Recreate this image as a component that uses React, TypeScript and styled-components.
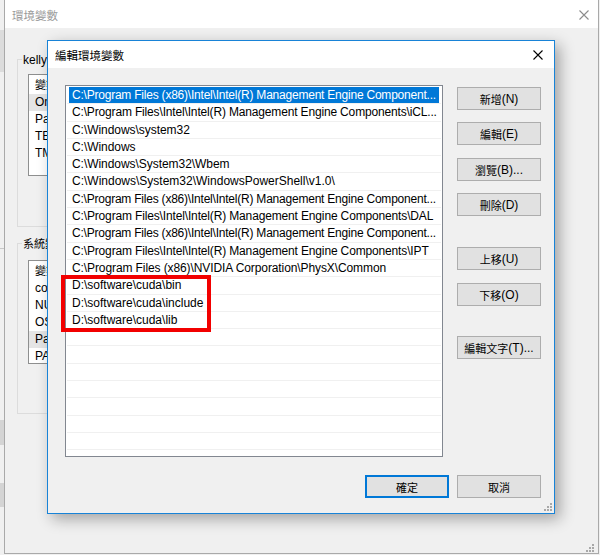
import React from 'react';
import styled, { createGlobalStyle } from 'styled-components';

const Global = createGlobalStyle`
  html, body { margin: 0; padding: 0; }
  body {
    width: 600px; height: 555px; overflow: hidden;
    background: #f0f0f0;
    font-family: "Liberation Sans", "Noto Sans CJK TC", sans-serif;
    font-size: 12px; color: #000;
  }
  * { box-sizing: border-box; }
`;

const Desktop = styled.div`
  position: relative;
  width: 600px;
  height: 555px;
  overflow: hidden;
  background: #f0f0f0;
`;

/* ---------- window peeking out on the far left ---------- */
const BehindWindow = styled.div`
  position: absolute;
  left: 0;
  top: 0;
  width: 4px;
  height: 555px;
  background: #f0f0f0;
  display: flex;
  flex-direction: column;
`;
const BehindBlock = styled.div<{ $top: number; $h: number; $bg: string }>`
  margin-top: ${p => p.$top}px;
  height: ${p => p.$h}px;
  background: ${p => p.$bg};
`;

/* ---------- background window (環境變數) ---------- */
const BgWindow = styled.div`
  position: absolute;
  left: 4px;
  top: -1px;
  width: 595px;
  height: 555px;
  border: 1px solid #a9a9a9;
  background: #f0f0f0;
  display: flex;
  flex-direction: column;
`;
const BgTitleBar = styled.div`
  height: 28px;
  flex: none;
  background: #fff;
  display: flex;
  align-items: center;
  justify-content: space-between;
  padding: 1px 9px 0 7px;
  color: #999;
`;
const BgBody = styled.div`
  flex: 1;
  padding: 24px 0 0 12px;
  display: flex;
  flex-direction: column;
`;
const GroupBox = styled.fieldset<{ $mt: number; $pb: number }>`
  margin: ${p => p.$mt}px 0 0 0;
  padding: 0 0 ${p => p.$pb}px 4px;
  width: 530px;
  border: 1px solid #dcdcdc;
  min-width: 0;
`;
const Legend = styled.legend`
  padding: 0 2px 0 1px;
  line-height: 14px;
  font-size: 12px;
  white-space: nowrap;
`;
const ListView = styled.div<{ $mt: number; $h: number }>`
  margin: ${p => p.$mt}px 0 0 6px;
  width: 500px;
  height: ${p => p.$h}px;
  border: 1px solid #8e8f8f;
  background: #fff;
  overflow: hidden;
`;
const LvHeader = styled.div`
  height: 19px;
  line-height: 19px;
  padding-left: 6px;
  white-space: nowrap;
`;
const LvRow = styled.div<{ $hl?: boolean }>`
  height: 17px;
  line-height: 17px;
  padding-left: 6px;
  white-space: nowrap;
  background: ${p => (p.$hl ? '#e5e5e5' : 'transparent')};
`;

/* ---------- front dialog (編輯環境變數) ---------- */
const Dialog = styled.div`
  position: absolute;
  left: 47px;
  top: 40px;
  width: 508px;
  height: 474px;
  border: 1px solid #1883d7;
  background: #f0f0f0;
  box-shadow: 5px 5px 14px rgba(0, 0, 0, 0.32);
  display: flex;
  flex-direction: column;
`;
const DlgTitleBar = styled.div`
  height: 27px;
  flex: none;
  background: #fff;
  display: flex;
  align-items: center;
  justify-content: space-between;
  padding: 0 11px 0 7px;
`;
const DlgBody = styled.div`
  flex: 1;
  padding: 17px 13px 15px 17px;
  display: grid;
  grid-template-columns: 378px 84px;
  grid-template-rows: 372px 23px;
  column-gap: 14px;
  row-gap: 18px;
`;
const ListArea = styled.div`
  position: relative;
`;
const ListBox = styled.div`
  height: 372px;
  border: 1px solid #828790;
  background: #fff;
  padding: 1px;
  overflow: hidden;
`;
const PathRow = styled.div`
  height: 17.3px;
  border-bottom: 1px solid #f0f0f0;
  padding: 0 2px;
  display: flex;
`;
const PathCell = styled.div<{ $sel?: boolean; $ls: number }>`
  flex: 1;
  min-width: 0;
  padding-left: 3px;
  line-height: 16px;
  white-space: nowrap;
  overflow: hidden;
  letter-spacing: ${p => p.$ls}px;
  background: ${p => (p.$sel ? '#0078d7' : 'transparent')};
  color: ${p => (p.$sel ? '#fff' : '#000')};
`;
const Highlight = styled.div`
  position: absolute;
  left: -4px;
  top: 190px;
  width: 150px;
  height: 57px;
  border: 4px solid #f20000;
  pointer-events: none;
`;
const ButtonColumn = styled.div`
  display: flex;
  flex-direction: column;
  padding-top: 2px;
`;
const Button = styled.div<{ $mt?: number; $default?: boolean }>`
  margin-top: ${p => p.$mt ?? 0}px;
  width: 84px;
  height: 23px;
  flex: none;
  background: #e1e1e1;
  border: ${p => (p.$default ? '2px solid #0078d7' : '1px solid #adadad')};
  display: flex;
  align-items: center;
  justify-content: center;
  font-size: 12px;
  white-space: nowrap;
`;
const Footer = styled.div`
  grid-column: 1 / span 2;
  display: flex;
  justify-content: flex-end;
  gap: 8px;
`;
const Cjk = styled.span<{ $size?: number }>`
  font-family: "Noto Sans CJK TC", sans-serif;
  font-size: ${p => p.$size ?? 11}px;
`;
const Grip = styled.svg<{ $r: number; $b: number }>`
  position: absolute;
  right: ${p => p.$r}px;
  bottom: ${p => p.$b}px;
`;

const CloseIcon = ({ color }: { color: string }) => (
  <svg width="10" height="10" viewBox="0 0 10 10">
    <path d="M0.5 0.5 L9.5 9.5 M9.5 0.5 L0.5 9.5" stroke={color} strokeWidth="1.1" fill="none" />
  </svg>
);

const GripIcon = ({ r, b }: { r: number; b: number }) => (
  <Grip $r={r} $b={b} width="8" height="8" viewBox="0 0 8 8">
    {[
      [6, 0],
      [3, 3],
      [6, 3],
      [0, 6],
      [3, 6],
      [6, 6],
    ].map(([x, y], i) => (
      <rect key={i} x={x} y={y} width="2" height="2" fill="#a8a8a8" />
    ))}
  </Grip>
);

type PathItem = { text: string; ls: number };
const paths: PathItem[] = [
  { text: 'C:\\Program Files (x86)\\Intel\\Intel(R) Management Engine Component...', ls: -0.22 },
  { text: 'C:\\Program Files\\Intel\\Intel(R) Management Engine Components\\iCL...', ls: -0.16 },
  { text: 'C:\\Windows\\system32', ls: -0.05 },
  { text: 'C:\\Windows', ls: -0.05 },
  { text: 'C:\\Windows\\System32\\Wbem', ls: -0.05 },
  { text: 'C:\\Windows\\System32\\WindowsPowerShell\\v1.0\\', ls: 0 },
  { text: 'C:\\Program Files (x86)\\Intel\\Intel(R) Management Engine Component...', ls: -0.22 },
  { text: 'C:\\Program Files\\Intel\\Intel(R) Management Engine Components\\DAL', ls: -0.15 },
  { text: 'C:\\Program Files (x86)\\Intel\\Intel(R) Management Engine Component...', ls: -0.22 },
  { text: 'C:\\Program Files\\Intel\\Intel(R) Management Engine Components\\IPT', ls: -0.15 },
  { text: 'C:\\Program Files (x86)\\NVIDIA Corporation\\PhysX\\Common', ls: -0.1 },
  { text: 'D:\\software\\cuda\\bin', ls: 0 },
  { text: 'D:\\software\\cuda\\include', ls: 0 },
  { text: 'D:\\software\\cuda\\lib', ls: 0 },
  ...Array.from({ length: 8 }, () => ({ text: '', ls: 0 })),
];

const userVars = ['OneDrive', 'Path', 'TEMP', 'TMP'];
const sysVars = ['configsetroot', 'NUMBER_OF_PROCESSORS', 'OS', 'Path', 'PATHEXT'];

export default function App() {
  return (
    <Desktop>
      <Global />
      <BehindWindow>
        <BehindBlock $top={30} $h={42} $bg="#dcdcdc" />
        <BehindBlock $top={176} $h={1} $bg="#c8c8c8" />
        <BehindBlock $top={171} $h={25} $bg="#d4d4d4" />
        <BehindBlock $top={38} $h={24} $bg="#d4d4d4" />
      </BehindWindow>

      <BgWindow>
        <BgTitleBar>
          <Cjk $size={11.5}>環境變數</Cjk>
          <CloseIcon color="#8c8c8c" />
        </BgTitleBar>
        <BgBody>
          <GroupBox $mt={0} $pb={50}>
            <Legend>
              kelly <Cjk>的使用者變數</Cjk>(U)
            </Legend>
            <ListView $mt={7} $h={102}>
              <LvHeader>
                <Cjk>變數</Cjk>
              </LvHeader>
              {userVars.map((v, i) => (
                <LvRow key={v} $hl={i === 0}>
                  {v}
                </LvRow>
              ))}
            </ListView>
          </GroupBox>
          <GroupBox $mt={9} $pb={49}>
            <Legend>
              <Cjk>系統變數</Cjk>(S)
            </Legend>
            <ListView $mt={9} $h={104}>
              <LvHeader>
                <Cjk>變數</Cjk>
              </LvHeader>
              {sysVars.map((v, i) => (
                <LvRow key={v} $hl={i === 3}>
                  {v}
                </LvRow>
              ))}
            </ListView>
          </GroupBox>
        </BgBody>
        <GripIcon r={4} b={1} />
      </BgWindow>

      <Dialog>
        <DlgTitleBar>
          <Cjk $size={11.5}>編輯環境變數</Cjk>
          <CloseIcon color="#000" />
        </DlgTitleBar>
        <DlgBody>
          <ListArea>
            <ListBox>
              {paths.map((p, i) => (
                <PathRow key={i}>
                  <PathCell $sel={i === 0} $ls={p.ls}>
                    {p.text}
                  </PathCell>
                </PathRow>
              ))}
            </ListBox>
            <Highlight />
          </ListArea>
          <ButtonColumn>
            <Button><Cjk>新增</Cjk>(N)</Button>
            <Button $mt={12}><Cjk>編輯</Cjk>(E)</Button>
            <Button $mt={13}><Cjk>瀏覽</Cjk>(B)...</Button>
            <Button $mt={12}><Cjk>刪除</Cjk>(D)</Button>
            <Button $mt={31}><Cjk>上移</Cjk>(U)</Button>
            <Button $mt={13}><Cjk>下移</Cjk>(O)</Button>
            <Button $mt={30}><Cjk>編輯文字</Cjk>(T)...</Button>
          </ButtonColumn>
          <Footer>
            <Button $default><Cjk>確定</Cjk></Button>
            <Button><Cjk>取消</Cjk></Button>
          </Footer>
        </DlgBody>
        <GripIcon r={2} b={2} />
      </Dialog>
    </Desktop>
  );
}
